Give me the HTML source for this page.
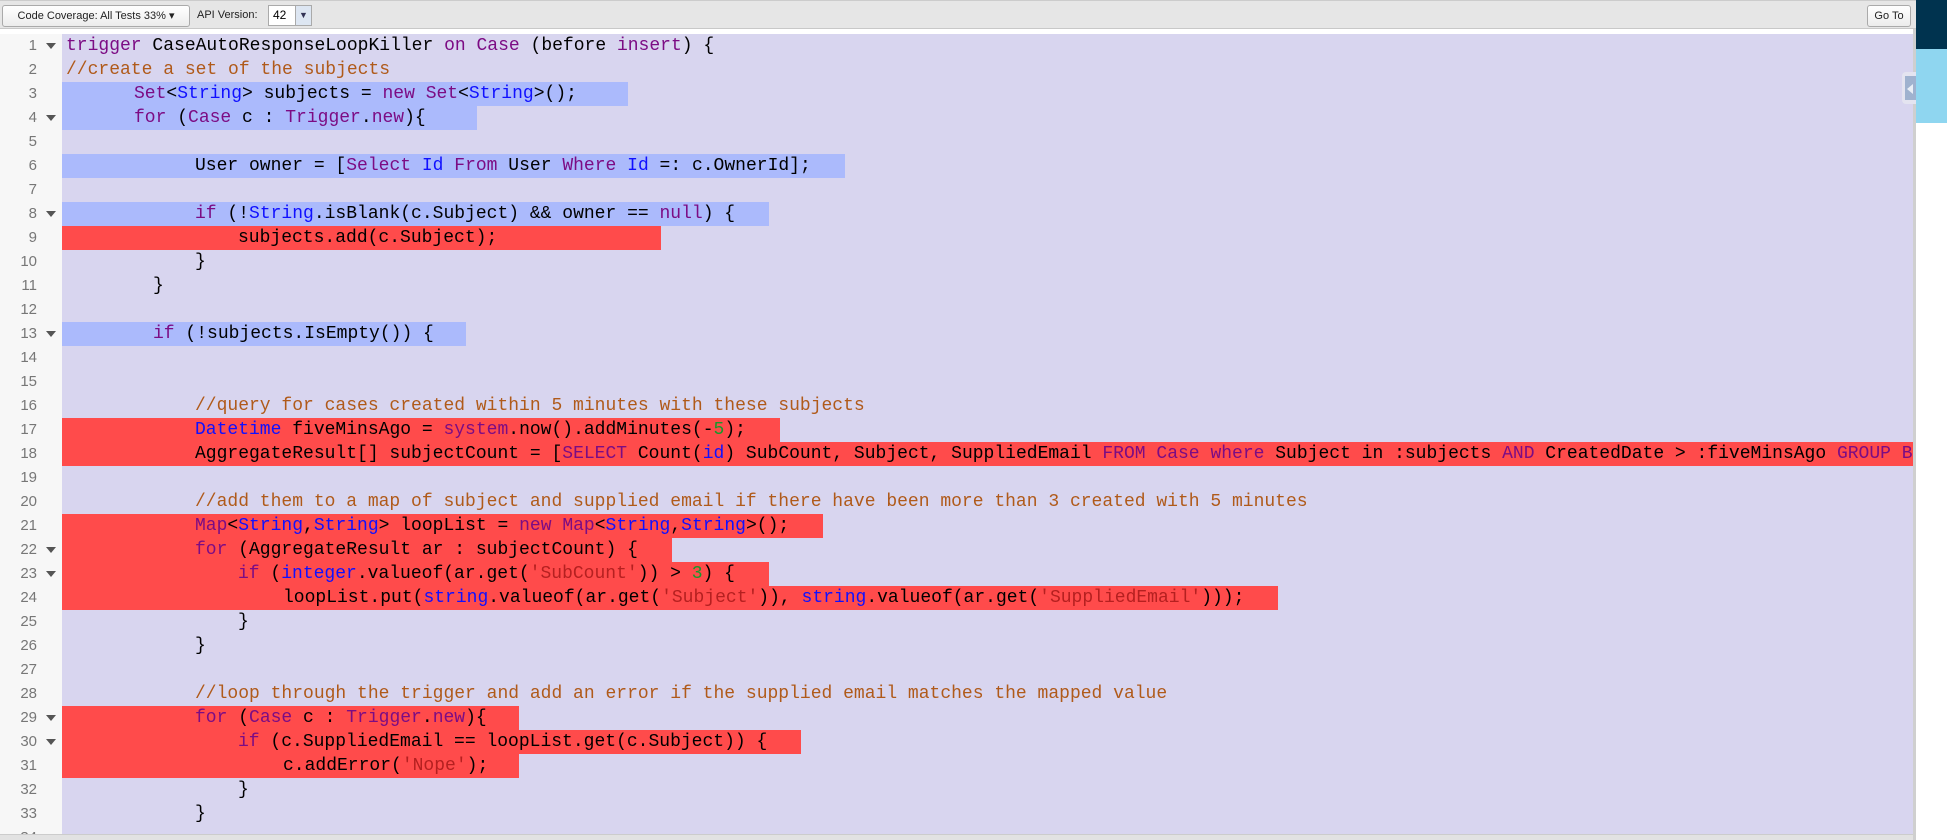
<!DOCTYPE html>
<html><head><meta charset="utf-8"><style>
*{margin:0;padding:0;box-sizing:border-box}
body{width:1947px;height:840px;overflow:hidden;background:#fff;position:relative;font-family:"Liberation Sans",sans-serif}
#tb{position:absolute;left:0;top:0;width:1916px;height:29px;background:#e6e6e6;border-top:1px solid #ccc;border-bottom:1px solid #c8c8c8}
.btn{position:absolute;background:linear-gradient(#fff,#ececec);border:1px solid #aaa;border-radius:3px;font-size:11px;color:#222;line-height:20px;text-align:center}
#gut{position:absolute;left:0;top:34px;width:62px;height:806px;background:#f7f7f7}
#code{position:absolute;left:62px;top:34px;width:1851px;height:800px;background:#d8d5ef}
.ln{position:absolute;left:0;width:37px;text-align:right;font-family:"Liberation Sans",sans-serif;font-size:15px;color:#777;height:24px;line-height:24px}
.ar{position:absolute;left:46px;width:0;height:0;border-left:5px solid transparent;border-right:5px solid transparent;border-top:6px solid #555}
.hl{position:absolute;left:62px;height:24px}
.b{background:#abbafc}.r{background:#ff4b4b}
.t{position:absolute;height:24px;line-height:24px;font-family:"Liberation Mono",monospace;font-size:18px;white-space:pre;color:#000;letter-spacing:-0.0px}
.k{color:#7c0c84}.y{color:#1010ff}.c{color:#b05a1a}.s{color:#b52020}.n{color:#159a2b}
</style></head><body>
<div id="tb">
<div class="btn" style="left:2px;top:4px;width:188px">Code Coverage: All Tests 33% ▾</div>
<div style="position:absolute;left:197px;top:4px;font-size:11px;line-height:20px;color:#222">API Version:</div>
<div style="position:absolute;left:268px;top:4px;width:44px;height:21px;background:#fff;border:1px solid #aaa;font-size:12px;line-height:19px;padding-left:4px">42<span style="position:absolute;right:0;top:0;width:16px;height:19px;background:#dde6f2;border-left:1px solid #aaa;font-size:9px;text-align:center;color:#335">▼</span></div>
<div class="btn" style="left:1867px;top:4px;width:44px">Go To</div>
</div>
<div style="position:absolute;left:1916px;top:0;width:31px;height:49px;background:#00334f"></div>
<div style="position:absolute;left:1916px;top:49px;width:31px;height:74px;background:#8fd6f0"></div>
<div style="position:absolute;left:1913px;top:29px;width:3px;height:811px;background:#cfcfcf"></div>
<div id="gut"></div>
<div id="code"></div>
<div style="position:absolute;left:1902px;top:72px;width:14px;height:32px;background:#e4e4f0;border-radius:4px 0 0 4px"></div>
<div style="position:absolute;left:1905px;top:76px;width:11px;height:24px;background:#9fb2cf"></div>
<div style="position:absolute;left:1907px;top:84px;width:0;height:0;border-top:5px solid transparent;border-bottom:5px solid transparent;border-right:6px solid #e8eef6"></div>
<div style="position:absolute;left:0;top:834px;width:1913px;height:6px;background:#e2e2e2;border-top:1px solid #ccc"></div>

<!-- highlights -->
<div class="hl b" style="top:82px;width:566px"></div>
<div class="hl b" style="top:106px;width:415px"></div>
<div class="hl b" style="top:154px;width:783px"></div>
<div class="hl b" style="top:202px;width:707px"></div>
<div class="hl r" style="top:226px;width:599px"></div>
<div class="hl b" style="top:322px;width:404px"></div>
<div class="hl r" style="top:418px;width:718px"></div>
<div class="hl r" style="top:442px;width:1851px"></div>
<div class="hl r" style="top:514px;width:761px"></div>
<div class="hl r" style="top:538px;width:610px"></div>
<div class="hl r" style="top:562px;width:707px"></div>
<div class="hl r" style="top:586px;width:1216px"></div>
<div class="hl r" style="top:706px;width:457px"></div>
<div class="hl r" style="top:730px;width:739px"></div>
<div class="hl r" style="top:754px;width:457px"></div>

<!-- line numbers -->
<div class="ln" style="top:34px">1</div><div class="ar" style="top:43px"></div>
<div class="ln" style="top:58px">2</div>
<div class="ln" style="top:82px">3</div>
<div class="ln" style="top:106px">4</div><div class="ar" style="top:115px"></div>
<div class="ln" style="top:130px">5</div>
<div class="ln" style="top:154px">6</div>
<div class="ln" style="top:178px">7</div>
<div class="ln" style="top:202px">8</div><div class="ar" style="top:211px"></div>
<div class="ln" style="top:226px">9</div>
<div class="ln" style="top:250px">10</div>
<div class="ln" style="top:274px">11</div>
<div class="ln" style="top:298px">12</div>
<div class="ln" style="top:322px">13</div><div class="ar" style="top:331px"></div>
<div class="ln" style="top:346px">14</div>
<div class="ln" style="top:370px">15</div>
<div class="ln" style="top:394px">16</div>
<div class="ln" style="top:418px">17</div>
<div class="ln" style="top:442px">18</div>
<div class="ln" style="top:466px">19</div>
<div class="ln" style="top:490px">20</div>
<div class="ln" style="top:514px">21</div>
<div class="ln" style="top:538px">22</div><div class="ar" style="top:547px"></div>
<div class="ln" style="top:562px">23</div><div class="ar" style="top:571px"></div>
<div class="ln" style="top:586px">24</div>
<div class="ln" style="top:610px">25</div>
<div class="ln" style="top:634px">26</div>
<div class="ln" style="top:658px">27</div>
<div class="ln" style="top:682px">28</div>
<div class="ln" style="top:706px">29</div><div class="ar" style="top:715px"></div>
<div class="ln" style="top:730px">30</div><div class="ar" style="top:739px"></div>
<div class="ln" style="top:754px">31</div>
<div class="ln" style="top:778px">32</div>
<div class="ln" style="top:802px">33</div>
<div class="ln" style="top:826px;height:8px;overflow:hidden">34</div>

<!-- code -->
<div class="t" style="top:34px;left:66px"><span class="k">trigger</span> CaseAutoResponseLoopKiller <span class="k">on</span> <span class="k">Case</span> (before <span class="k">insert</span>) {</div>
<div class="t c" style="top:58px;left:66px">//create a set of the subjects</div>
<div class="t" style="top:82px;left:134px"><span class="k">Set</span>&lt;<span class="y">String</span>&gt; subjects = <span class="k">new</span> <span class="k">Set</span>&lt;<span class="y">String</span>&gt;();</div>
<div class="t" style="top:106px;left:134px"><span class="k">for</span> (<span class="k">Case</span> c : <span class="k">Trigger</span>.<span class="k">new</span>){</div>
<div class="t" style="top:154px;left:195px">User owner = [<span class="k">Select</span> <span class="y">Id</span> <span class="k">From</span> User <span class="k">Where</span> <span class="y">Id</span> =: c.OwnerId];</div>
<div class="t" style="top:202px;left:195px"><span class="k">if</span> (!<span class="y">String</span>.isBlank(c.Subject) &amp;&amp; owner == <span class="k">null</span>) {</div>
<div class="t" style="top:226px;left:238px">subjects.add(c.Subject);</div>
<div class="t" style="top:250px;left:195px">}</div>
<div class="t" style="top:274px;left:153px">}</div>
<div class="t" style="top:322px;left:153px"><span class="k">if</span> (!subjects.IsEmpty()) {</div>
<div class="t c" style="top:394px;left:195px">//query for cases created within 5 minutes with these subjects</div>
<div class="t" style="top:418px;left:195px"><span class="y">Datetime</span> fiveMinsAgo = <span class="k">system</span>.now().addMinutes(-<span class="n">5</span>);</div>
<div class="t" style="top:442px;left:195px;width:1718px;overflow:hidden">AggregateResult[] subjectCount = [<span class="k">SELECT</span> Count(<span class="y">id</span>) SubCount, Subject, SuppliedEmail <span class="k">FROM</span> <span class="k">Case</span> <span class="k">where</span> Subject in :subjects <span class="k">AND</span> CreatedDate &gt; :fiveMinsAgo <span class="k">GROUP BY</span> Subject, SuppliedEmail];</div>
<div class="t c" style="top:490px;left:195px">//add them to a map of subject and supplied email if there have been more than 3 created with 5 minutes</div>
<div class="t" style="top:514px;left:195px"><span class="k">Map</span>&lt;<span class="y">String</span>,<span class="y">String</span>&gt; loopList = <span class="k">new</span> <span class="k">Map</span>&lt;<span class="y">String</span>,<span class="y">String</span>&gt;();</div>
<div class="t" style="top:538px;left:195px"><span class="k">for</span> (AggregateResult ar : subjectCount) {</div>
<div class="t" style="top:562px;left:238px"><span class="k">if</span> (<span class="y">integer</span>.valueof(ar.get(<span class="s">'SubCount'</span>)) &gt; <span class="n">3</span>) {</div>
<div class="t" style="top:586px;left:283px">loopList.put(<span class="y">string</span>.valueof(ar.get(<span class="s">'Subject'</span>)), <span class="y">string</span>.valueof(ar.get(<span class="s">'SuppliedEmail'</span>)));</div>
<div class="t" style="top:610px;left:238px">}</div>
<div class="t" style="top:634px;left:195px">}</div>
<div class="t c" style="top:682px;left:195px">//loop through the trigger and add an error if the supplied email matches the mapped value</div>
<div class="t" style="top:706px;left:195px"><span class="k">for</span> (<span class="k">Case</span> c : <span class="k">Trigger</span>.<span class="k">new</span>){</div>
<div class="t" style="top:730px;left:238px"><span class="k">if</span> (c.SuppliedEmail == loopList.get(c.Subject)) {</div>
<div class="t" style="top:754px;left:283px">c.addError(<span class="s">'Nope'</span>);</div>
<div class="t" style="top:778px;left:238px">}</div>
<div class="t" style="top:802px;left:195px">}</div>
</body></html>
